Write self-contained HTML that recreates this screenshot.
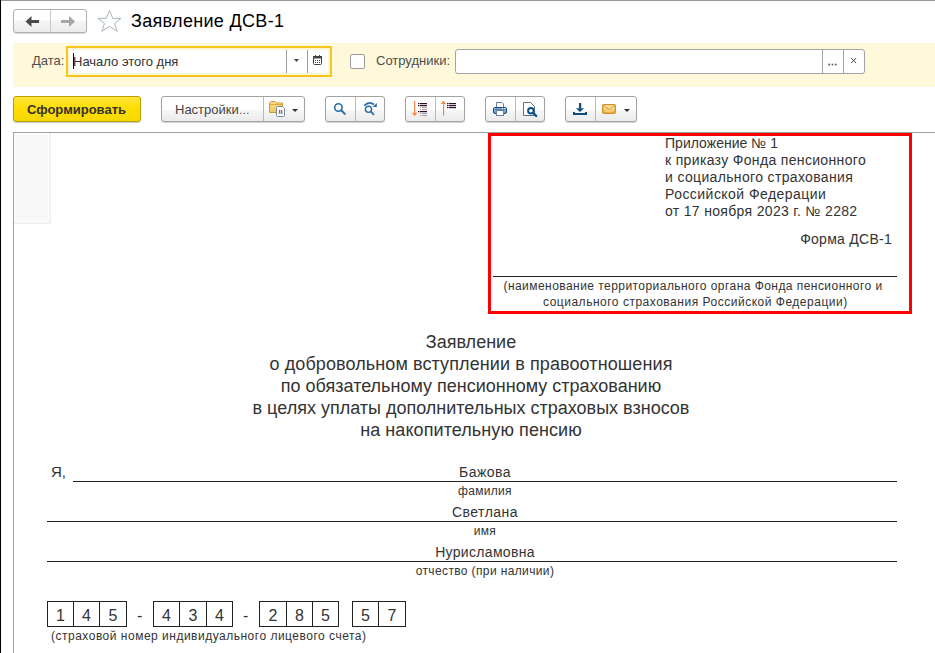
<!DOCTYPE html>
<html><head><meta charset="utf-8">
<style>
*{box-sizing:border-box;margin:0;padding:0}
html,body{width:935px;height:653px;overflow:hidden;background:#fff}
body{position:relative;font-family:"Liberation Sans",sans-serif;color:#333}
.a{position:absolute}
.t{position:absolute;white-space:nowrap}
.btn{position:absolute;top:96px;height:26px;border:1px solid #a3a3a3;border-radius:3px;
 background:linear-gradient(#fff 0,#fff 54%,#f6f6f6 56%,#ebebeb 100%);box-shadow:0 1px 1px rgba(0,0,0,.18)}
.div{position:absolute;top:0;bottom:0;width:1px;background:#b9b9b9}
.ln{position:absolute;height:1px;background:#000}
.vl{position:absolute;width:1px;background:#000}
.dg{position:absolute;top:601px;height:26px;font-size:16px;line-height:30px;text-align:center;color:#333}
</style></head><body>
<!-- frame lines -->
<div class="a" style="left:0;top:0;width:935px;height:1px;background:#9a9a9a"></div>
<div class="a" style="left:0;top:0;width:1px;height:653px;background:#000"></div>

<!-- nav buttons -->
<div class="a" style="left:13px;top:9px;width:74px;height:24px;border:1px solid #b0b0b0;border-radius:3px;background:linear-gradient(#fff 0,#fff 45%,#f5f5f5 50%,#ececec 100%);box-shadow:0 1px 1px rgba(0,0,0,.15)">
  <div class="div" style="left:36px;background:#c8c8c8"></div>
  <svg class="a" style="left:0;top:0" width="72" height="22" viewBox="0 0 72 22">
    <path d="M11.5 11.5 L17.5 6 L17.5 17 Z" fill="#4a4a4a"/>
    <rect x="17" y="10" width="8" height="3" fill="#4a4a4a"/>
    <path d="M61 11.5 L55 6 L55 17 Z" fill="#a6a6a6"/>
    <rect x="47" y="10" width="8" height="3" fill="#a6a6a6"/>
  </svg>
</div>
<!-- star -->
<svg class="a" style="left:96px;top:9px" width="28" height="25" viewBox="0 0 28 25">
  <path d="M13.5 1.6 L16.8 9.4 L25 9.4 L18.5 14.5 L21.2 22.3 L13.5 17.3 L5.8 22.3 L8.5 14.5 L2 9.4 L10.2 9.4 Z" fill="none" stroke="#a9b3be" stroke-width="1" stroke-linejoin="miter"/>
</svg>
<div class="t" style="left:131px;top:12px;font-size:18px;line-height:18px;letter-spacing:0.32px;color:#000">Заявление ДСВ-1</div>

<!-- yellow band -->
<div class="a" style="left:13px;top:43px;width:922px;height:44px;background:#fff8da"></div>
<div class="t" style="left:32px;top:54px;font-size:13px;line-height:13px;color:#4d4d4d">Дата:</div>
<div class="a" style="left:66px;top:46px;width:266px;height:31px;border:2px solid #f7c51f;background:#fdf6d5"></div>
<div class="a" style="left:70px;top:50px;width:258px;height:23px;background:#fff;border-radius:2px"></div>
<div class="a" style="left:286px;top:50px;width:1px;height:23px;background:#9c9c9c"></div>
<div class="a" style="left:307px;top:50px;width:1px;height:23px;background:#9c9c9c"></div>
<svg class="a" style="left:294px;top:59px" width="5" height="3" viewBox="0 0 5 3"><path d="M0 0H5L2.5 3Z" fill="#444"/></svg>
<svg class="a" style="left:313px;top:55px" width="9" height="10" viewBox="0 0 9 10">
  <rect x="0.5" y="1.5" width="8" height="8" rx="1" fill="#fff" stroke="#444"/>
  <rect x="0" y="1" width="9" height="2.5" fill="#444"/>
  <rect x="2" y="0" width="1" height="2" fill="#444"/><rect x="6" y="0" width="1" height="2" fill="#444"/>
  <rect x="2" y="5" width="1" height="1" fill="#444"/><rect x="4" y="5" width="1" height="1" fill="#444"/><rect x="6" y="5" width="1" height="1" fill="#444"/>
  <rect x="2" y="7" width="1" height="1" fill="#444"/><rect x="4" y="7" width="1" height="1" fill="#444"/><rect x="6" y="7" width="1" height="1" fill="#444"/>
</svg>
<div class="a" style="left:73px;top:53px;width:1px;height:16px;background:#000"></div>
<div class="t" style="left:73px;top:55px;font-size:13px;line-height:13px;color:#333">Начало этого дня</div>

<div class="a" style="left:350px;top:54px;width:15px;height:15px;border:1px solid #9a9a9a;border-radius:2px;background:#fff"></div>
<div class="t" style="left:376px;top:54px;font-size:13px;line-height:13px;color:#4d4d4d">Сотрудники:</div>
<div class="a" style="left:455px;top:49px;width:410px;height:25px;border:1px solid #a3a3a3;border-radius:3px;background:#fff">
  <div class="div" style="left:366px;background:#a3a3a3"></div>
  <div class="div" style="left:387px;background:#a3a3a3"></div>
  <svg class="a" style="left:372px;top:13px" width="10" height="3"><rect x="0.3" y="0.7" width="1.7" height="1.7" fill="#555"/><rect x="3.6" y="0.7" width="1.7" height="1.7" fill="#555"/><rect x="6.9" y="0.7" width="1.7" height="1.7" fill="#555"/></svg>
  <svg class="a" style="left:394px;top:7px" width="7" height="7" viewBox="0 0 7 7"><path d="M1.2 1.2L6 6M6 1.2L1.2 6" stroke="#4a4a4a" stroke-width="1"/></svg>
</div>

<!-- toolbar buttons -->
<div class="a" style="left:13px;top:96px;width:128px;height:26px;border:1px solid #b59f00;border-radius:3px;background:linear-gradient(#ffe538,#ffdd00 50%,#f6d800);box-shadow:0 1px 1px rgba(0,0,60,.2)"></div>
<div class="t" style="left:27px;top:103px;font-size:13px;line-height:13px;font-weight:700;color:#333">Сформировать</div>

<div class="btn" style="left:161px;width:144px">
  <div class="div" style="left:101px"></div>
</div>
<div class="t" style="left:175px;top:103px;font-size:13px;line-height:13px;color:#444">Настройки<span style="font-size:11px">…</span></div>

<div class="btn" style="left:325px;width:60px"><div class="div" style="left:29px"></div></div>
<div class="btn" style="left:405px;width:60px"><div class="div" style="left:29px"></div></div>
<div class="btn" style="left:485px;width:60px"><div class="div" style="left:29px"></div></div>
<div class="btn" style="left:565px;width:72px"><div class="div" style="left:29px"></div></div>


<!-- toolbar icons (page coords) -->
<svg class="a" style="left:0;top:90px" width="700" height="35" viewBox="0 90 700 35">
  <defs>
    <linearGradient id="fold" x1="0" y1="0" x2="0" y2="1"><stop offset="0" stop-color="#fbe08e"/><stop offset="1" stop-color="#f2c45c"/></linearGradient>
    <linearGradient id="env" x1="0" y1="0" x2="0" y2="1"><stop offset="0" stop-color="#fdebb5"/><stop offset="1" stop-color="#f3c55a"/></linearGradient>
    <linearGradient id="prn" x1="0" y1="0" x2="0" y2="1"><stop offset="0" stop-color="#9cc3e6"/><stop offset="1" stop-color="#5d93c6"/></linearGradient>
  </defs>
  <!-- folder + doc -->
  <path d="M269.5 112.5 V103 L271 101.5 H275 L276.5 103 H282.5 V112.5 Z" fill="url(#fold)" stroke="#d39735" stroke-width="1"/>
  <path d="M269.5 104.5 H282.5" stroke="#e0a843" stroke-width="1"/>
  <path d="M276.5 107.5 Q276.5 106.5 277.5 106.5 H282.5 L284.5 108.5 V115.5 Q284.5 116.5 283.5 116.5 H277.5 Q276.5 116.5 276.5 115.5 Z" fill="#fff" stroke="#6f8aa6" stroke-width="1"/>
  <rect x="279" y="110" width="1.3" height="3" fill="#e53935"/>
  <rect x="281" y="110" width="1.3" height="3" fill="#43a047"/>
  <rect x="278" y="113" width="5" height="0.8" fill="#999"/>
  <path d="M292 109 H298 L295 112 Z" fill="#333"/>
  <!-- search -->
  <circle cx="338.4" cy="107.5" r="3.7" fill="none" stroke="#2a6ca5" stroke-width="1.6"/>
  <path d="M341.2 110.3 L344.8 113.9" stroke="#2a6ca5" stroke-width="2" stroke-linecap="round"/>
  <!-- search next -->
  <path d="M364.3 105.6 Q369 100.6 374 104.5" fill="none" stroke="#2a6ca5" stroke-width="1.6"/>
  <path d="M376.8 103 V107 H372.6 Z" fill="#2a6ca5"/>
  <circle cx="368.5" cy="109.3" r="3.1" fill="none" stroke="#2a6ca5" stroke-width="1.4"/>
  <path d="M370.9 111.7 L373.5 114.3" stroke="#2a6ca5" stroke-width="1.8" stroke-linecap="round"/>
  <!-- sort desc -->
  <rect x="414" y="101" width="1.2" height="12.5" fill="#f0894a"/>
  <path d="M411.8 112.8 H417.4 L414.6 116.2 Z" fill="#f0894a"/>
  <g fill="#2e0f2e">
    <rect x="418" y="103" width="1.5" height="1.2"/><rect x="420" y="103" width="7" height="1.2"/>
    <rect x="418" y="105" width="1.5" height="1.2"/><rect x="420" y="105" width="7" height="1.2"/>
    <rect x="418" y="111" width="1.5" height="1.2"/><rect x="420" y="111" width="7" height="1.2"/>
  </g>
  <g fill="#a8a8a8">
    <rect x="420" y="107" width="1" height="1.1"/><rect x="422" y="107" width="5" height="1.1"/>
    <rect x="420" y="109" width="1" height="1.1"/><rect x="422" y="109" width="5" height="1.1"/>
    <rect x="420" y="113" width="1" height="1.1"/><rect x="422" y="113" width="5" height="1.1"/>
    <rect x="420" y="115" width="1" height="1.1"/><rect x="422" y="115" width="5" height="1.1"/>
  </g>
  <!-- sort asc -->
  <rect x="443" y="103.5" width="1.2" height="12.2" fill="#f0894a"/>
  <path d="M440.8 104 H446.2 L443.5 100.8 Z" fill="#f0894a"/>
  <g fill="#2e0f2e">
    <rect x="447" y="103" width="1.5" height="1.2"/><rect x="449" y="103" width="7" height="1.2"/>
    <rect x="447" y="105" width="1.5" height="1.2"/><rect x="449" y="105" width="7" height="1.2"/>
    <rect x="447" y="107" width="1.5" height="1.2"/><rect x="449" y="107" width="7" height="1.2"/>
  </g>
  <!-- printer -->
  <path d="M496.5 107.5 V102.5 H502 L503.5 104 V107.5" fill="#fff" stroke="#6c8196" stroke-width="1"/>
  <rect x="493.5" y="107.5" width="13" height="6" rx="1.5" fill="url(#prn)" stroke="#1d4f80" stroke-width="1"/>
  <rect x="495" y="108.7" width="10" height="0.9" fill="#3d6a96"/>
  <rect x="502" y="108" width="1" height="1" fill="#fff"/><rect x="504" y="108" width="1" height="1" fill="#fff"/>
  <rect x="496.5" y="110.5" width="7" height="5" fill="#fff" stroke="#6c8196" stroke-width="1"/>
  <!-- preview -->
  <path d="M523.5 115.5 V102.5 H530.5 L534.5 106.5 V115.5 Z" fill="#fff" stroke="#5d7189" stroke-width="1"/>
  <circle cx="530.9" cy="110.7" r="2.8" fill="#fff" stroke="#0f4f85" stroke-width="2"/>
  <path d="M533.4 113.2 L536.2 116" stroke="#0f4f85" stroke-width="2.4" stroke-linecap="round"/>
  <!-- download -->
  <rect x="579" y="103" width="2.2" height="5.5" fill="#0d4c80"/>
  <path d="M576 108.2 H584 L580 112 Z" fill="#0d4c80"/>
  <path d="M574 112 V114 H586 V112" fill="none" stroke="#0d4c80" stroke-width="2"/>
  <!-- envelope -->
  <rect x="602.7" y="104.6" width="12.6" height="8.6" rx="1.2" fill="url(#env)" stroke="#d3902a" stroke-width="1.4"/>
  <path d="M603.5 105.2 L609 109.6 L614.5 105.2" fill="none" stroke="#d3902a" stroke-width="0.9"/>
  <path d="M603.5 112.6 L607 109.2 M614.5 112.6 L611 109.2" fill="none" stroke="#e0a844" stroke-width="0.7"/>
  <path d="M624 109 H630 L627 112 Z" fill="#333"/>
</svg>

<!-- document -->
<div class="a" style="left:13px;top:132px;width:922px;height:1px;background:#a0a0a0"></div>
<div class="a" style="left:13px;top:132px;width:1px;height:521px;background:#a0a0a0"></div>
<div class="a" style="left:14px;top:133px;width:37px;height:91px;border-right:2px solid #f1f1f1;border-bottom:2px solid #f1f1f1;padding:1px"><div style="width:100%;height:100%;background:#f8f8f8"></div></div>

<div class="a" style="left:488px;top:133px;width:424px;height:181px;border:3px solid #f00"></div>

<!-- red box texts -->
<div class="t" style="left:665px;top:135px;font-size:14px;line-height:17px;letter-spacing:0.03px">Приложение № 1</div>
<div class="t" style="left:665px;top:152px;font-size:14px;line-height:17px;letter-spacing:0.335px">к приказу Фонда пенсионного</div>
<div class="t" style="left:665px;top:169px;font-size:14px;line-height:17px;letter-spacing:0.344px">и социального страхования</div>
<div class="t" style="left:665px;top:186px;font-size:14px;line-height:17px;letter-spacing:0.455px">Российской Федерации</div>
<div class="t" style="left:665px;top:203px;font-size:14px;line-height:17px;letter-spacing:0.324px">от 17 ноября 2023 г. № 2282</div>
<div class="t" style="left:701px;width:191px;top:232px;font-size:14px;line-height:14px;text-align:right;letter-spacing:0.27px">Форма ДСВ-1</div>
<div class="ln" style="left:493px;top:276px;width:404px;background:#222"></div>
<div class="t" style="left:493px;width:400px;top:279px;font-size:12px;line-height:15.5px;text-align:center;letter-spacing:0.45px">(наименование территориального органа Фонда пенсионного и</div>
<div class="t" style="left:543px;top:295px;font-size:12px;line-height:15.5px;letter-spacing:0.513px">социального страхования Российской Федерации)</div>

<!-- title -->
<div class="t" style="left:221px;width:500px;top:331px;font-size:18px;line-height:22px;text-align:center">Заявление</div>
<div class="t" style="left:221px;width:500px;top:353px;font-size:18px;line-height:22px;text-align:center;letter-spacing:0.1px">о добровольном вступлении в правоотношения</div>
<div class="t" style="left:221px;width:500px;top:375px;font-size:18px;line-height:22px;text-align:center">по обязательному пенсионному страхованию</div>
<div class="t" style="left:221px;width:500px;top:397px;font-size:18px;line-height:22px;text-align:center">в целях уплаты дополнительных страховых взносов</div>
<div class="t" style="left:221px;width:500px;top:419px;font-size:18px;line-height:22px;text-align:center;letter-spacing:0.08px">на накопительную пенсию</div>

<!-- FIO -->
<div class="t" style="left:51px;top:464px;font-size:15px;line-height:15px">Я,</div>
<div class="ln" style="left:73px;top:481px;width:824px;background:#222"></div>
<div class="ln" style="left:47px;top:521px;width:850px;background:#222"></div>
<div class="ln" style="left:47px;top:561px;width:850px;background:#222"></div>
<div class="t" style="left:285px;width:400px;top:465px;font-size:14px;line-height:14px;text-align:center;letter-spacing:0.45px">Бажова</div>
<div class="t" style="left:285px;width:400px;top:485px;font-size:12px;line-height:12px;text-align:center;letter-spacing:0.3px">фамилия</div>
<div class="t" style="left:285px;width:400px;top:505px;font-size:14px;line-height:14px;text-align:center;letter-spacing:0.48px">Светлана</div>
<div class="t" style="left:285px;width:400px;top:525px;font-size:12px;line-height:12px;text-align:center;letter-spacing:0.3px">имя</div>
<div class="t" style="left:285px;width:400px;top:545px;font-size:14px;line-height:14px;text-align:center;letter-spacing:0.32px">Нурисламовна</div>
<div class="t" style="left:285px;width:400px;top:565px;font-size:12px;line-height:12px;text-align:center;letter-spacing:0.37px">отчество (при наличии)</div>

<!-- snils -->
<div class="ln" style="left:47px;top:601px;width:80px;background:#222"></div>
<div class="ln" style="left:47px;top:626px;width:80px;background:#222"></div>
<div class="vl" style="left:47px;top:601px;height:26px;background:#222"></div>
<div class="vl" style="left:73px;top:601px;height:26px;background:#222"></div>
<div class="vl" style="left:99px;top:601px;height:26px;background:#222"></div>
<div class="vl" style="left:126px;top:601px;height:26px;background:#222"></div>
<div class="dg" style="left:48px;width:25px">1</div>
<div class="dg" style="left:74px;width:25px">4</div>
<div class="dg" style="left:100px;width:26px">5</div>
<div class="ln" style="left:153px;top:601px;width:80px;background:#222"></div>
<div class="ln" style="left:153px;top:626px;width:80px;background:#222"></div>
<div class="vl" style="left:153px;top:601px;height:26px;background:#222"></div>
<div class="vl" style="left:179px;top:601px;height:26px;background:#222"></div>
<div class="vl" style="left:206px;top:601px;height:26px;background:#222"></div>
<div class="vl" style="left:232px;top:601px;height:26px;background:#222"></div>
<div class="dg" style="left:154px;width:25px">4</div>
<div class="dg" style="left:180px;width:26px">3</div>
<div class="dg" style="left:207px;width:25px">4</div>
<div class="ln" style="left:259px;top:601px;width:80px;background:#222"></div>
<div class="ln" style="left:259px;top:626px;width:80px;background:#222"></div>
<div class="vl" style="left:259px;top:601px;height:26px;background:#222"></div>
<div class="vl" style="left:286px;top:601px;height:26px;background:#222"></div>
<div class="vl" style="left:312px;top:601px;height:26px;background:#222"></div>
<div class="vl" style="left:338px;top:601px;height:26px;background:#222"></div>
<div class="dg" style="left:260px;width:26px">2</div>
<div class="dg" style="left:287px;width:25px">8</div>
<div class="dg" style="left:313px;width:25px">5</div>
<div class="ln" style="left:352px;top:601px;width:54px;background:#222"></div>
<div class="ln" style="left:352px;top:626px;width:54px;background:#222"></div>
<div class="vl" style="left:352px;top:601px;height:26px;background:#222"></div>
<div class="vl" style="left:378px;top:601px;height:26px;background:#222"></div>
<div class="vl" style="left:405px;top:601px;height:26px;background:#222"></div>
<div class="dg" style="left:353px;width:25px">5</div>
<div class="dg" style="left:379px;width:26px">7</div>
<div class="t" style="left:137px;top:608px;font-size:16px;line-height:16px">-</div>
<div class="t" style="left:243px;top:608px;font-size:16px;line-height:16px">-</div>
<div class="t" style="left:51px;top:630px;font-size:12px;line-height:12px;letter-spacing:0.5px">(страховой номер индивидуального лицевого счета)</div>
</body></html>
